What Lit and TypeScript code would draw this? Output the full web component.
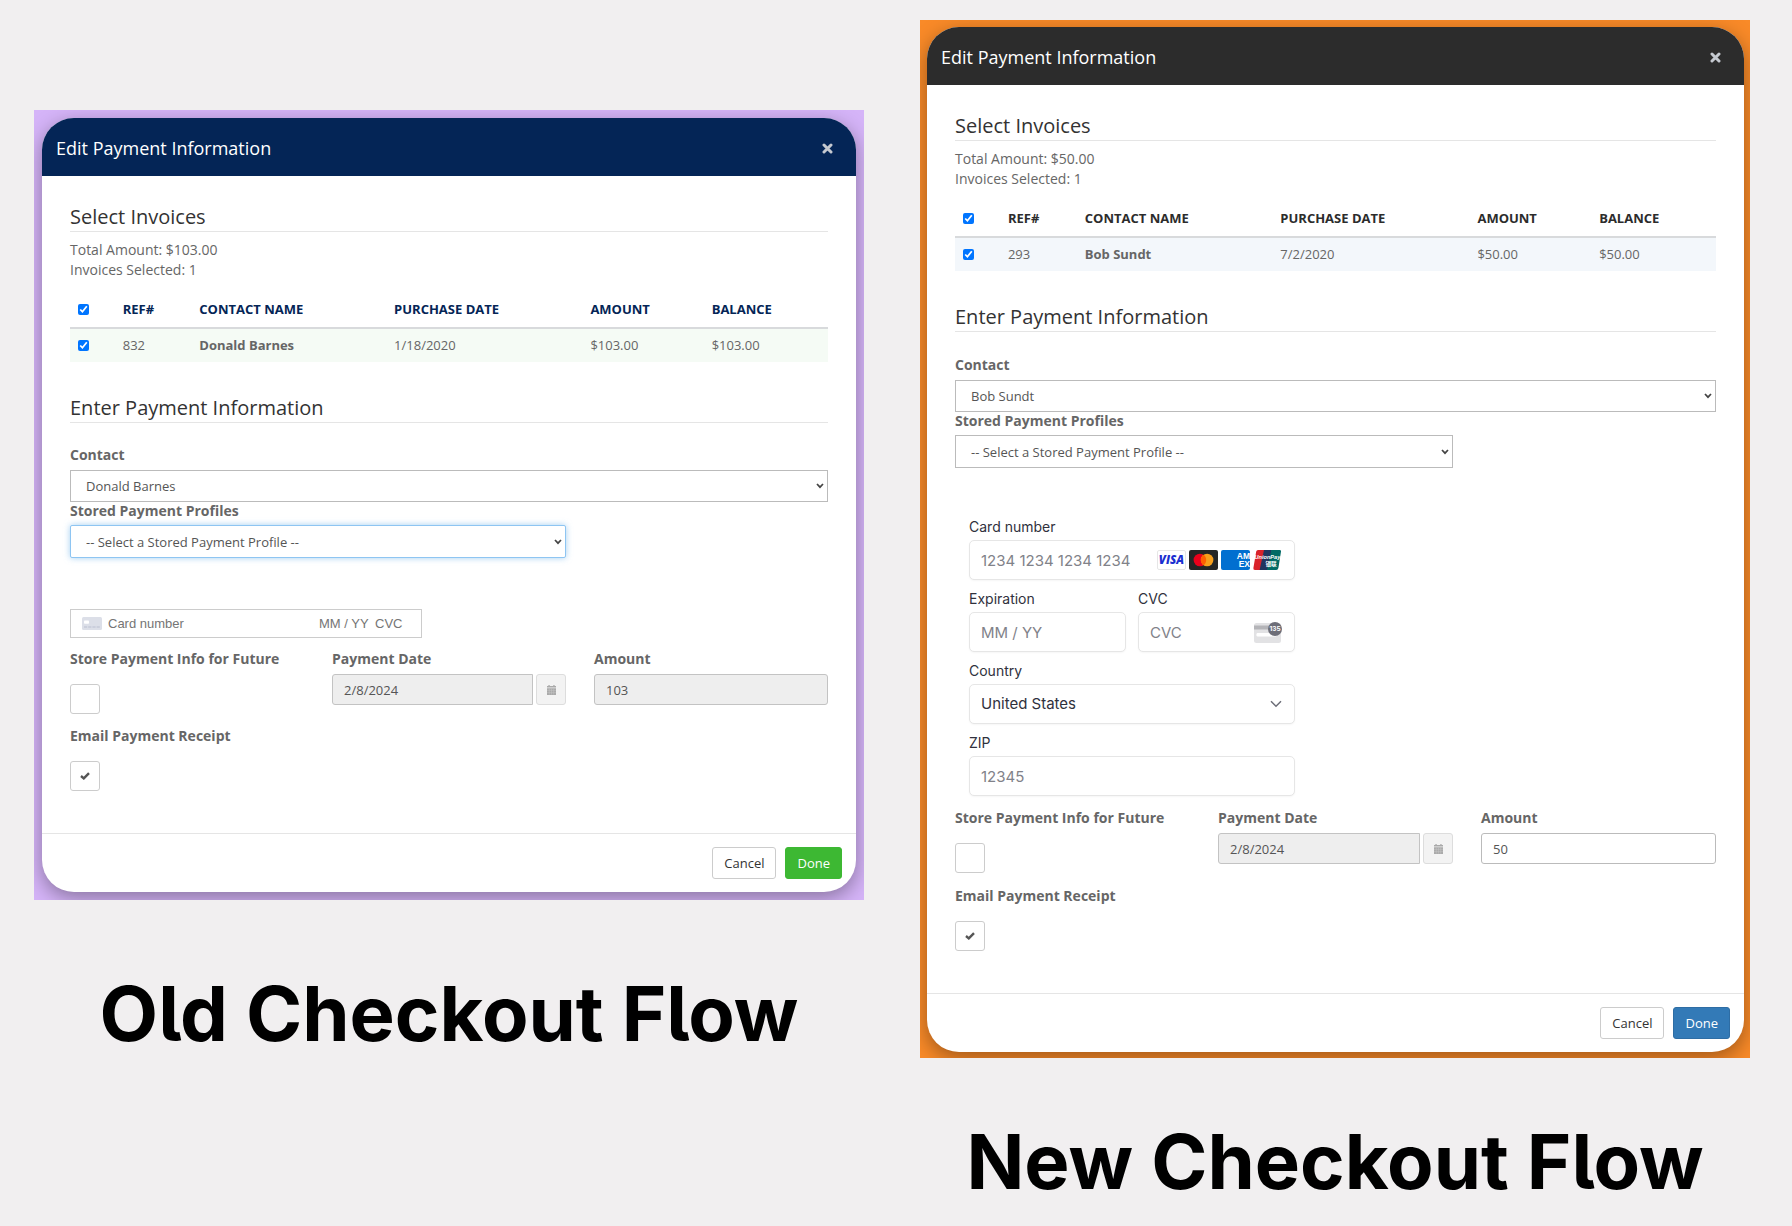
import { LitElement, html, css } from "lit";
import { customElement, property } from "lit/decorators.js";

interface Flow {
  theme: "classic" | "modern";
  caption: string;
  total: string;
  ref: string;
  contact: string;
  date: string;
  amount: string;
  amountLocked: boolean;
}

const FLOWS: Flow[] = [
  {
    theme: "classic",
    caption: "Old Checkout Flow",
    total: "$103.00",
    ref: "832",
    contact: "Donald Barnes",
    date: "1/18/2020",
    amount: "103",
    amountLocked: true,
  },
  {
    theme: "modern",
    caption: "New Checkout Flow",
    total: "$50.00",
    ref: "293",
    contact: "Bob Sundt",
    date: "7/2/2020",
    amount: "50",
    amountLocked: false,
  },
];

const closeIcon = html`<svg width="11" height="11" viewBox="0 0 11 11" aria-hidden="true">
  <path d="M2 2 9 9M9 2 2 9" stroke="currentColor" stroke-width="3" stroke-linecap="round" />
</svg>`;

const caretIcon = html`<svg class="caret" width="8" height="6" viewBox="0 0 8 6" aria-hidden="true">
  <path d="M1 1 4 4.2 7 1" fill="none" stroke="#444" stroke-width="1.7" />
</svg>`;

const checkIcon = html`<svg class="tick" width="10" height="8" viewBox="0 0 10 8" aria-hidden="true">
  <path d="M1 4 3.8 6.4 9 1.2" fill="none" stroke="#555" stroke-width="2.4" />
</svg>`;

const calendarIcon = html`<svg width="9" height="10" viewBox="0 0 9 10" aria-hidden="true">
  <path d="M0 1h1.4V0h1.3v1h3.6V0h1.3v1H9v1.6H0zM0 3.2h9V10H0z" fill="#aaa" />
  <path d="M0 5.4h9M0 7.6h9M2.3 3.6v6M4.5 3.6v6M6.7 3.6v6" stroke="#c6c6c6" stroke-width=".5" />
</svg>`;

const blankCardIcon = html`<svg width="20" height="13" viewBox="0 0 20 13" aria-hidden="true">
  <rect width="20" height="13" rx="1.5" fill="#dcdfe8" />
  <rect x="2" y="3.4" width="5" height="3.4" rx=".8" fill="#fff" />
  <path d="M2 10h16" stroke="#b9bfcf" stroke-width="1.2" stroke-dasharray="3.2 1" />
</svg>`;

const cvcIcon = html`<svg width="28" height="21" viewBox="0 0 28 21" aria-hidden="true">
  <rect y="1" width="27" height="20" rx="2.5" fill="#e2e2e4" />
  <rect y="3.5" width="27" height="4" fill="#b4b4b8" />
  <rect x="2.5" y="11" width="20" height="3.4" rx="1.2" fill="#fff" />
  <circle cx="21" cy="7" r="7" fill="#6d6e78" />
  <text x="21" y="9.3" font-size="6.5" font-weight="700" font-family="Inter, sans-serif" fill="#fff" text-anchor="middle">135</text>
</svg>`;

const visaIcon = html`<svg width="29" height="20" viewBox="0 0 29 20" role="img" aria-label="Visa">
  <rect x=".5" y=".5" width="28" height="19" rx="1.5" fill="#fff" stroke="#e6e6e6" />
  <text x="14.4" y="14.2" font-size="11.5" font-weight="800" font-style="italic" font-family="Open Sans, sans-serif" fill="#1b2fd0" text-anchor="middle">VISA</text>
</svg>`;

const mastercardIcon = html`<svg width="29" height="20" viewBox="0 0 29 20" role="img" aria-label="Mastercard">
  <rect width="29" height="20" rx="2" fill="#252525" />
  <circle cx="10.9" cy="10" r="6.3" fill="#eb001b" />
  <circle cx="18.1" cy="10" r="6.3" fill="#f79e1b" />
  <path d="M14.5 4.83a6.3 6.3 0 0 1 0 10.34 6.3 6.3 0 0 1 0-10.34z" fill="#ff5f00" />
</svg>`;

const amexIcon = html`<svg width="29" height="20" viewBox="0 0 29 20" role="img" aria-label="American Express">
  <rect width="29" height="20" rx="2" fill="#016fd0" />
  <text font-size="8.5" font-weight="700" font-family="Liberation Sans, sans-serif" fill="#fff" text-anchor="end"><tspan x="29" y="9">AM</tspan><tspan x="29" y="16.8">EX</tspan></text>
</svg>`;

const unionPayIcon = html`<svg width="29" height="20" viewBox="0 0 29 20" role="img" aria-label="UnionPay">
  <path d="M5 0h7L8 20H2Q0 20 .4 18L3.2 1.6Q3.5 0 5 0z" fill="#d9222a" />
  <path d="M11 0h8l-4 20H6.6z" fill="#20355f" />
  <path d="M18.4 0H26.6Q28.3 0 28 1.6L25.4 18Q25 20 23.2 20H14z" fill="#006a65" />
  <text font-size="5.6" font-weight="700" fill="#fff" text-anchor="middle"><tspan x="14.4" y="8.6" font-style="italic" font-family="Liberation Sans, sans-serif">UnionPay</tspan><tspan x="18" y="15.6" font-family="Noto Sans CJK SC, sans-serif">银联</tspan></text>
</svg>`;

const chevronIcon = html`<svg class="chevron" width="12" height="8" viewBox="0 0 12 8" aria-hidden="true">
  <path d="M1 1.3 6 6.3 11 1.3" fill="none" stroke="#6d6e78" stroke-width="1.5" />
</svg>`;

@customElement("card-line")
export class CardLine extends LitElement {
  static styles = css`
    :host {
      display: block;
    }
    .line {
      display: flex;
      align-items: center;
      box-sizing: border-box;
      max-width: 352px;
      height: 29px;
      padding: 0 16px 0 11px;
      border: 1px solid #ccc;
      background: #fff;
    }
    .box {
      min-width: 0;
      padding: 0;
      border: 0;
      outline: 0;
      background: none;
      font: 13px/16px "Liberation Sans", Arial, sans-serif;
      color: #555;
    }
    .box::placeholder {
      color: #757575;
      opacity: 1;
    }
    .number {
      flex: 1;
      margin-left: 6px;
    }
    .expiry {
      width: 56px;
    }
    .code {
      width: 30px;
    }
  `;
  render() {
    return html`<div class="line">
      ${blankCardIcon}
      <input class="box number" placeholder="Card number" aria-label="Card number" />
      <input class="box expiry" placeholder="MM / YY" aria-label="Expiration" />
      <input class="box code" placeholder="CVC" aria-label="CVC" />
    </div>`;
  }
}

@customElement("card-panel")
export class CardPanel extends LitElement {
  static styles = css`
    :host {
      display: block;
    }
    .panel {
      display: grid;
      grid-template-columns: 1fr 1fr;
      gap: 11px 12px;
      max-width: 326px;
      margin-left: 14px;
      font-family: Inter, sans-serif;
      color: #30313d;
    }
    .wide {
      grid-column: 1 / -1;
    }
    .label {
      display: block;
      margin-bottom: 5px;
      font-size: 14px;
      line-height: 16px;
    }
    .shell {
      display: grid;
      grid-template-columns: minmax(0, 1fr) auto;
      align-items: center;
      box-sizing: border-box;
      height: 40px;
      padding-right: 12px;
      border: 1px solid #e6e6e6;
      border-radius: 5px;
      background: #fff;
      box-shadow: 0 1px 2px rgba(0, 0, 0, 0.04);
    }
    .box {
      grid-area: 1 / 1;
      width: 100%;
      min-width: 0;
      height: 38px;
      padding: 0 11px;
      border: 0;
      outline: 0;
      background: none;
      appearance: none;
      font: 15px/20px Inter, sans-serif;
      color: #30313d;
    }
    .box::placeholder {
      color: #818289;
      opacity: 1;
    }
    .pick {
      grid-column: 1 / -1;
    }
    .brands {
      display: flex;
      gap: 3px;
    }
    .chevron {
      grid-area: 1 / 2;
      pointer-events: none;
    }
  `;
  render() {
    return html`<div class="panel">
      <div class="wide">
        <label class="label" for="number">Card number</label>
        <div class="shell">
          <input class="box" id="number" placeholder="1234 1234 1234 1234" />
          <span class="brands">${visaIcon}${mastercardIcon}${amexIcon}${unionPayIcon}</span>
        </div>
      </div>
      <div>
        <label class="label" for="expiry">Expiration</label>
        <div class="shell"><input class="box" id="expiry" placeholder="MM / YY" /></div>
      </div>
      <div>
        <label class="label" for="code">CVC</label>
        <div class="shell"><input class="box" id="code" placeholder="CVC" />${cvcIcon}</div>
      </div>
      <div class="wide">
        <label class="label" for="country">Country</label>
        <div class="shell">
          <select class="box pick" id="country"><option>United States</option></select>${chevronIcon}
        </div>
      </div>
      <div class="wide">
        <label class="label" for="zip">ZIP</label>
        <div class="shell"><input class="box" id="zip" placeholder="12345" /></div>
      </div>
    </div>`;
  }
}

@customElement("payment-dialog")
export class PaymentDialog extends LitElement {
  @property({ attribute: false }) flow: Flow = FLOWS[0];

  static styles = css`
    :host {
      display: block;
      font-family: "Open Sans", sans-serif;
      font-size: 14px;
      line-height: 20px;
      color: #666;
    }
    .frame {
      overflow: hidden;
    }
    .classic {
      --bar: #042556;
      --head: #042556;
      --row: #f5fbf5;
      --done: #3db833;
      --done-edge: #3db833;
      --lead: 23px;
      --card-gap: 12px;
      --stack: 13px;
      padding: 8px;
      background: #d5b4f8;
    }
    .modern {
      --bar: #2c2c2c;
      --head: #2c2c2c;
      --row: #f3f7fb;
      --done: #337ab7;
      --done-edge: #2e6da4;
      --lead: 24px;
      --card-gap: 13px;
      --stack: 14px;
      padding: 7px 6px 6px 7px;
      background: #f98a28;
    }
    .dialog {
      border-radius: 32px;
      background: #fff;
      box-shadow: 0 6px 20px rgba(0, 0, 0, 0.36);
      overflow: clip;
    }
    .bar {
      display: flex;
      align-items: center;
      justify-content: space-between;
      box-sizing: border-box;
      height: 58px;
      padding: 2px 23px 0 14px;
      background: var(--bar);
      color: #fff;
    }
    .title {
      margin: 0;
      font-size: 18px;
      line-height: 26px;
      font-weight: 400;
    }
    .close {
      display: flex;
      padding: 0;
      border: 0;
      background: none;
      color: #c5c9d0;
    }
    .body {
      padding: 27px 28px 42px 28px;
    }
    .heading {
      margin: 0;
      border-bottom: 1px solid #e5e5e5;
      font-size: 20px;
      line-height: 28px;
      font-weight: 400;
      color: #333;
    }
    .second {
      margin-top: 32px;
    }
    .summary {
      margin: 8px 0 11px;
    }
    .invoices {
      width: 100%;
      table-layout: fixed;
      border-collapse: collapse;
      font-size: 13px;
    }
    .invoices th {
      padding: 8px;
      border-bottom: 2px solid #d8dadc;
      text-align: left;
      line-height: 20px;
      font-weight: 700;
      white-space: nowrap;
      color: var(--head);
    }
    .invoices td {
      padding: 8px;
      line-height: 17px;
      background: var(--row);
    }
    .invoices .name {
      font-weight: 700;
    }
    .c1 {
      width: 5.9%;
    }
    .c2 {
      width: 10.1%;
    }
    .c3 {
      width: 25.7%;
    }
    .c4 {
      width: 25.9%;
    }
    .c5 {
      width: 16%;
    }
    .mark {
      display: block;
      width: 11px;
      height: 11px;
      margin: 0;
    }
    .label {
      display: block;
      line-height: 18px;
      font-weight: 700;
      white-space: nowrap;
    }
    .contact {
      margin: var(--lead) 0 6px;
    }
    .pick {
      display: grid;
      align-items: center;
    }
    .pick > * {
      grid-area: 1 / 1;
    }
    .caret {
      justify-self: end;
      margin-right: 4px;
      pointer-events: none;
    }
    .select,
    .input {
      box-sizing: border-box;
      width: 100%;
      min-width: 0;
      border: 1px solid #bbb;
      background: #fff;
      font: 13px/18px "Open Sans", sans-serif;
      color: #555;
    }
    .select {
      appearance: none;
      height: 32px;
      padding: 0 15px;
      border-radius: 0;
      outline: 0;
    }
    .tall {
      height: 33px;
    }
    .glow {
      border-color: #8ec5f2;
      border-radius: 2px;
      box-shadow: 0 0 6px rgba(102, 175, 233, 0.6);
    }
    .grid {
      display: grid;
      grid-template-columns: repeat(3, minmax(0, 1fr));
      column-gap: 28px;
    }
    .profile {
      display: grid;
      grid-column: span 2;
      row-gap: 5px;
    }
    .card {
      display: block;
      margin: 51px 0 var(--card-gap);
    }
    .input {
      height: 31px;
      padding: 0 11px;
      border-radius: 3px;
    }
    .input:disabled {
      border-color: #c3c3c3;
      background: #eee;
    }
    .field {
      display: flex;
      gap: 3px;
      margin-top: 6px;
    }
    .day {
      flex: 1;
      border-radius: 3px 0 0 3px;
    }
    .calendar {
      display: flex;
      align-items: center;
      justify-content: center;
      box-sizing: border-box;
      width: 30px;
      height: 31px;
      padding: 0;
      border: 1px solid #ddd;
      border-radius: 3px;
      background: #f3f3f3;
    }
    .toggle {
      display: grid;
      place-items: center;
      width: 30px;
      height: 30px;
      margin-top: 16px;
    }
    .toggle > * {
      grid-area: 1 / 1;
    }
    .square {
      appearance: none;
      width: 30px;
      height: 30px;
      margin: 0;
      box-sizing: border-box;
      border: 1px solid #ccc;
      border-radius: 3px;
      background: #fff;
    }
    .tick {
      visibility: hidden;
      pointer-events: none;
    }
    .square:checked + .tick {
      visibility: visible;
    }
    .receipt {
      margin-top: var(--stack);
    }
    .footer {
      display: flex;
      justify-content: flex-end;
      gap: 9px;
      padding: 13px 14px 13px 13px;
      border-top: 1px solid #e5e5e5;
    }
    .button {
      height: 32px;
      padding: 0 11px;
      border: 1px solid #ccc;
      border-radius: 3px;
      background: #fff;
      font: 13px/20px "Open Sans", sans-serif;
      color: #333;
    }
    .done {
      border-color: var(--done-edge);
      background: var(--done);
      color: #fff;
    }
  `;

  render() {
    const f = this.flow;
    const classic = f.theme === "classic";
    return html`<div class="frame ${f.theme}">
      <section class="dialog" aria-labelledby="title">
        <header class="bar">
          <h2 class="title" id="title">Edit Payment Information</h2>
          <button class="close" type="button" aria-label="Close">${closeIcon}</button>
        </header>
        <div class="body">
          <h3 class="heading">Select Invoices</h3>
          <div class="summary">
            <div>Total Amount: ${f.total}</div>
            <div>Invoices Selected: 1</div>
          </div>
          <table class="invoices">
            <colgroup>
              <col class="c1" /><col class="c2" /><col class="c3" /><col class="c4" /><col class="c5" /><col />
            </colgroup>
            <thead>
              <tr>
                <th><input class="mark" type="checkbox" checked aria-label="Select all invoices" /></th>
                <th>REF#</th>
                <th>CONTACT NAME</th>
                <th>PURCHASE DATE</th>
                <th>AMOUNT</th>
                <th>BALANCE</th>
              </tr>
            </thead>
            <tbody>
              <tr>
                <td><input class="mark" type="checkbox" checked aria-label="Select invoice ${f.ref}" /></td>
                <td>${f.ref}</td>
                <td class="name">${f.contact}</td>
                <td>${f.date}</td>
                <td>${f.total}</td>
                <td>${f.total}</td>
              </tr>
            </tbody>
          </table>
          <h3 class="heading second">Enter Payment Information</h3>
          <label class="label contact" for="contact">Contact</label>
          <div class="pick">
            <select class="select" id="contact"><option>${f.contact}</option></select>${caretIcon}
          </div>
          <div class="grid">
            <div class="profile">
              <label class="label" for="profile">Stored Payment Profiles</label>
              <div class="pick">
                <select class="select tall ${classic ? "glow" : ""}" id="profile">
                  <option>-- Select a Stored Payment Profile --</option></select
                >${caretIcon}
              </div>
            </div>
          </div>
          ${classic ? html`<card-line class="card"></card-line>` : html`<card-panel class="card"></card-panel>`}
          <div class="grid">
            <div>
              <label class="label" for="store">Store Payment Info for Future</label>
              <div class="toggle"><input class="square" id="store" type="checkbox" />${checkIcon}</div>
              <label class="label receipt" for="email">Email Payment Receipt</label>
              <div class="toggle"><input class="square" id="email" type="checkbox" checked />${checkIcon}</div>
            </div>
            <div>
              <label class="label" for="day">Payment Date</label>
              <div class="field">
                <input class="input day" id="day" value="2/8/2024" disabled />
                <button class="calendar" type="button" aria-label="Choose date" disabled>${calendarIcon}</button>
              </div>
            </div>
            <div>
              <label class="label" for="amount">Amount</label>
              <div class="field">
                <input class="input" id="amount" .value=${f.amount} ?disabled=${f.amountLocked} />
              </div>
            </div>
          </div>
        </div>
        <footer class="footer">
          <button class="button" type="button">Cancel</button>
          <button class="button done" type="button">Done</button>
        </footer>
      </section>
    </div>`;
  }
}

@customElement("app-root")
export class AppRoot extends LitElement {
  static styles = css`
    :host {
      display: block;
      min-height: 100vh;
      background: #f1eff0;
    }
    .board {
      display: grid;
      grid-template-columns: repeat(2, minmax(0, 1fr));
      align-items: start;
      column-gap: 56px;
      padding: 0 42px 0 34px;
    }
    .flow {
      display: grid;
      margin: 0;
    }
    .classic {
      padding-top: 110px;
      row-gap: 68px;
    }
    .modern {
      padding-top: 20px;
      row-gap: 58px;
    }
    .caption {
      text-align: center;
      font: 700 76px/90px Inter, sans-serif;
      font-feature-settings: "cv05";
      white-space: nowrap;
      color: #000;
    }
  `;
  render() {
    return html`<main class="board">
      ${FLOWS.map(
        (f) => html`<figure class="flow ${f.theme}">
          <payment-dialog .flow=${f}></payment-dialog>
          <figcaption class="caption">${f.caption}</figcaption>
        </figure>`
      )}
    </main>`;
  }
}
